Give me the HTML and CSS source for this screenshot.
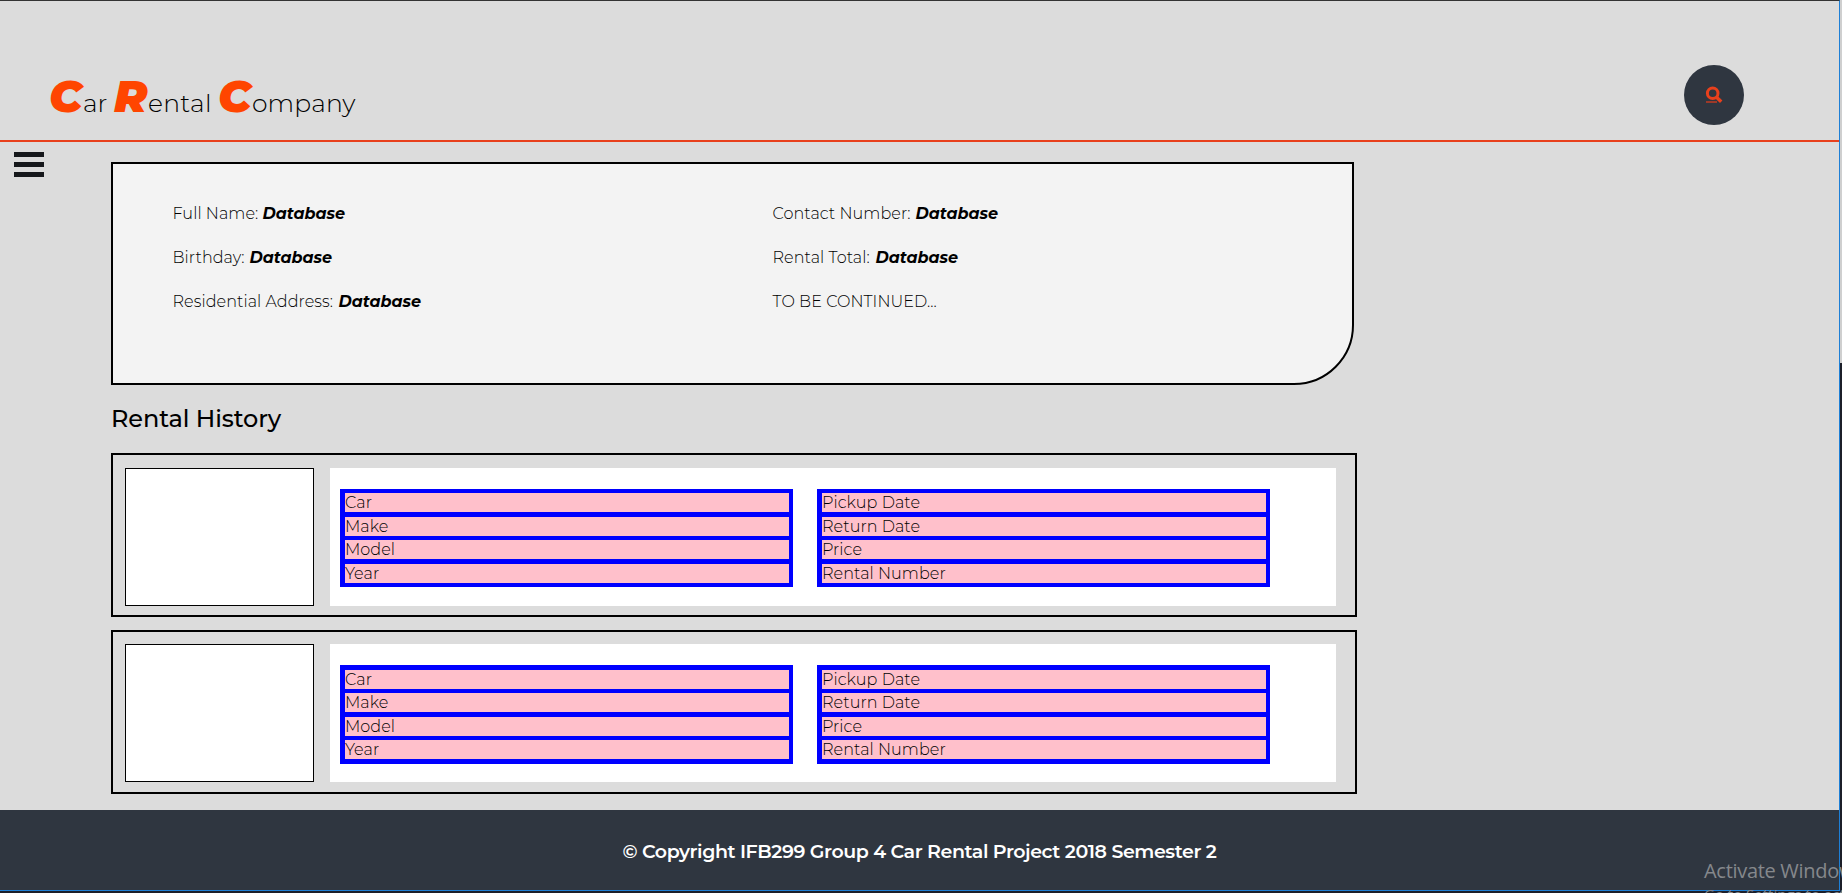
FILE: index.html
```html
<!DOCTYPE html>
<html lang="en">
<head>
<meta charset="utf-8">
<title>Car Rental Company</title>
<link rel="stylesheet" href="styles.css">
</head>
<body>
<div class="window">
<div class="page">
  <header class="header">
    <div class="logo"><b class="cap">C</b><span class="word w-car">ar</span><b class="cap">R</b><span class="word w-rental">ental</span><b class="cap">C</b><span class="word w-company">ompany</span></div>
    <div class="search">
      <svg width="60" height="60" viewBox="0 0 60 60" fill="none" stroke="#e8401c">
        <path d="M22 38h11" stroke-width="1.6" stroke="#b93b22"/>
        <circle cx="28.7" cy="29.3" r="5.3" stroke-width="3"/>
        <path d="M32.6 33.2l4.6 4.6" stroke-width="3.4"/>
      </svg>
    </div>
  </header>
  <div class="body">
    <div class="menu"><i></i><i></i><i></i></div>
    <main class="content">
      <section class="profile">
        <div class="col">
          <p><span class="label l-name">Full Name:</span><em>Database</em></p>
          <p><span class="label l-birth">Birthday:</span><em>Database</em></p>
          <p><span class="label l-address">Residential Address:</span><em>Database</em></p>
        </div>
        <div class="col">
          <p><span class="label l-contact">Contact Number:</span><em>Database</em></p>
          <p><span class="label l-total">Rental Total:</span><em>Database</em></p>
          <p><span class="label l-more">TO BE CONTINUED...</span></p>
        </div>
      </section>
      <h2 class="title">Rental History</h2>
      <section class="rental">
        <div class="photo"></div>
        <div class="details">
          <div class="table"><div>Car</div><div>Make</div><div>Model</div><div>Year</div></div>
          <div class="table"><div>Pickup Date</div><div>Return Date</div><div>Price</div><div>Rental Number</div></div>
        </div>
      </section>
      <section class="rental second">
        <div class="photo"></div>
        <div class="details">
          <div class="table"><div>Car</div><div>Make</div><div>Model</div><div>Year</div></div>
          <div class="table"><div>Pickup Date</div><div>Return Date</div><div>Price</div><div>Rental Number</div></div>
        </div>
      </section>
    </main>
  </div>
  <footer class="footer"><span>© Copyright IFB299 Group 4 Car Rental Project 2018 Semester 2</span></footer>
</div>
<div class="edge"></div>
<div class="watermark"><div class="wm-title">Activate Windows</div><div class="wm-sub">Go to Settings to activate Windows.</div></div>
</div>
</body>
</html>
```
FILE: styles.css
```css
* { box-sizing: border-box; }
body { margin: 0; overflow: hidden; background: #1c1f29; color: #000; font: 300 16px/19px Montserrat, Inter, sans-serif; }
.window { position: relative; display: flex; width: 1842px; height: 893px; overflow: hidden; }
.page { width: 1840px; height: 891px; background: #dcdcdc; border-top: 1px solid #333; border-right: 1px solid #1d7fd6; border-bottom: 1px solid #1d7fd6; }
.edge { width: 2px; height: 363px; background: #cfcfcf; }
.header { display: flex; justify-content: space-between; height: 141px; padding: 63px 95px 0 49px; border-bottom: 2px solid #e8401c; }
.logo { display: flex; align-items: baseline; height: 60px; font-size: 25px; line-height: 64px; white-space: nowrap; }
.cap { display: block; width: 34px; color: #ff4500; font-size: 45px; font-weight: 900; font-style: italic; }
.w-car { width: 31px; }
.w-rental { width: 70px; letter-spacing: 0.3px; }
.w-company { width: 110px; letter-spacing: 0.1px; }
.search { width: 60px; height: 60px; margin-top: 1px; border-radius: 50%; background: #2f3640; }
.search svg { display: block; margin-top: -1px; }
.body { display: flex; height: 668px; }
.menu { display: flex; flex-direction: column; gap: 5px; width: 111px; padding: 10px 0 0 14px; }
.menu i { width: 30px; height: 5px; background: #16181b; }
.content { width: 1246px; padding-top: 20px; }
.profile { display: flex; width: 1243px; height: 223px; padding: 40px 0 0 59.5px; background: #f3f3f3; border: 2px solid #000; border-bottom-right-radius: 60px; }
.col { flex: none; width: 600px; }
.col + .col { width: 500px; }
.col p { display: flex; height: 19px; margin: 0 0 25px; white-space: nowrap; }
.label { display: block; letter-spacing: 0.07px; }
.l-name { width: 90px; }
.l-birth { width: 77px; }
.l-address { width: 166px; }
.l-contact { width: 143px; }
.l-total { width: 103px; }
.col em { font-weight: 700; }
.title { height: 28px; margin: 20px 0; font-size: 24px; line-height: 28px; font-weight: 500; letter-spacing: -0.1px; }
.rental { display: flex; gap: 16px; height: 164px; padding: 13px 12px 0; border: 2px solid #000; }
.rental.second { margin-top: 13px; padding-top: 12px; }
.photo { width: 189px; height: 138px; background: #fff; border: 1px solid #000; }
.details { display: flex; gap: 24px; width: 1006px; height: 138px; padding: 21px 10px 0; background: #fff; }
.table { display: grid; grid-template-rows: 20px 19px 20px 19px; row-gap: 4px; width: 453px; height: 98px; padding: 4px 4px 0 5px; background: #00f; letter-spacing: 0.07px; }
.table div { height: 19px; background: pink; white-space: nowrap; }
.second .table { height: 99px; padding-top: 5px; grid-template-rows: 19px 20px 19px 19px; }
.footer { display: flex; justify-content: center; height: 80px; padding-top: 29px; background: #2f3640; color: #fff; font-size: 19px; line-height: 25px; font-weight: 600; letter-spacing: -0.42px; white-space: nowrap; }
.watermark { position: absolute; left: 1704px; top: 857px; color: #85888c; font-family: "Open Sans", sans-serif; font-weight: 400; white-space: nowrap; }
.wm-title { font-size: 20px; line-height: 28px; letter-spacing: -0.3px; }
.wm-sub { font-size: 15px; line-height: 18px; }
```
